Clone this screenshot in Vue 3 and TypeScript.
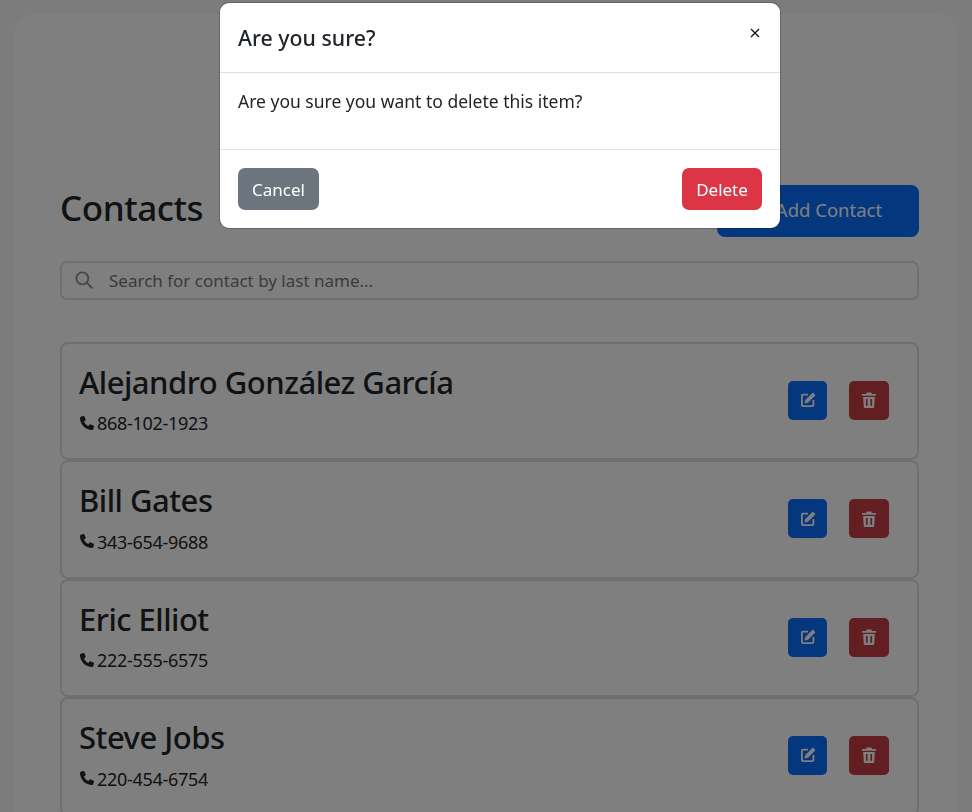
<script setup lang="ts">
interface Contact {
  name: string
  phone: string
}

const contacts: Contact[] = [
  { name: 'Alejandro González García', phone: '868-102-1923' },
  { name: 'Bill Gates', phone: '343-654-9688' },
  { name: 'Eric Elliot', phone: '222-555-6575' },
  { name: 'Steve Jobs', phone: '220-454-6754' },
]
</script>

<template>
  <div class="page">
    <main class="panel">
      <header class="top">
        <h2>Contacts</h2>
        <button class="add-btn">Add Contact</button>
      </header>

      <div class="search">
        <svg class="search-icon" viewBox="0 0 20 20" fill="none" stroke="currentColor" stroke-width="2">
          <circle cx="8.2" cy="8.2" r="6.6" />
          <path d="M13 13l5.6 5.6" stroke-linecap="round" />
        </svg>
        <span class="placeholder">Search for contact by last name...</span>
      </div>

      <ul class="list">
        <li v-for="c in contacts" :key="c.name" class="card">
          <div class="info">
            <h3>{{ c.name }}</h3>
            <div class="phone">
              <svg viewBox="0 0 512 512" class="phone-icon">
                <path fill="currentColor" d="M164.900 24.600c-7.700-18.600-28-28.500-47.400-23.200l-88 24C12.100 30.200 0 46 0 64C0 311.400 200.600 512 448 512c18 0 33.800-12.100 38.600-29.500l24-88c5.300-19.400-4.600-39.700-23.200-47.400l-96-40c-16.300-6.800-35.200-2.100-46.300 11.600L304.700 368C234.300 334.700 177.300 277.700 144 207.300L193.300 167c13.700-11.200 18.400-30 11.600-46.300l-40-96z" />
              </svg>
              <span>{{ c.phone }}</span>
            </div>
          </div>
          <div class="actions">
            <button class="icon-btn edit" aria-label="Edit">
              <svg viewBox="0 0 16 16" width="16" height="16" fill="none">
                <path d="M8 2.600H2.800q-.9 0-.9.900v9.700q0 .9.900.9h9.700q.9 0 .9-.9V8" stroke="currentColor" stroke-width="1.800" />
                <path fill="currentColor" d="M12.800.6l2.700 2.700-7.500 7.500-3.500.8.800-3.500z" />
              </svg>
            </button>
            <button class="icon-btn trash" aria-label="Delete">
              <svg viewBox="0 0 14 16" width="14" height="16">
                <path fill="currentColor" fill-rule="evenodd" d="M4.800.5h4.400l.7 1.500H14v1.700H0V2h4.100zM1.200 5h11.600l-.6 10.200q-.1.800-1 .8H2.800q-.9 0-1-.8zm2.700 2v6.800h1.700V7zm4.500 0v6.800h1.700V7z" />
              </svg>
            </button>
          </div>
        </li>
      </ul>
    </main>

    <div class="backdrop">
      <div class="modal">
        <div class="modal-header">
          <h5>Are you sure?</h5>
          <button class="close" aria-label="Close">
            <svg viewBox="0 0 10 10" width="10" height="10">
              <path d="M1 1l8 8M9 1l-8 8" stroke="currentColor" stroke-width="1.300" />
            </svg>
          </button>
        </div>
        <div class="modal-body">Are you sure you want to delete this item?</div>
        <div class="modal-footer">
          <button class="btn cancel">Cancel</button>
          <button class="btn delete">Delete</button>
        </div>
      </div>
    </div>
  </div>
</template>

<style>
html,
body {
  margin: 0;
  height: 812px;
  overflow: hidden;
}
</style>

<style scoped>
.page {
  height: 812px;
  overflow: hidden;
  box-sizing: border-box;
  padding: 14px 14px 0;
  background: #f8f8f8;
  color: #212529;
  font-family: 'Noto Sans', 'Open Sans', sans-serif;
  font-size: 18px;
  line-height: 1.5;
}

.panel {
  min-height: 900px;
  box-sizing: border-box;
  padding: 171px 39px 0 46px;
  background: #fff;
  border-radius: 20px 20px 0 0;
}

.top {
  display: flex;
  align-items: center;
  justify-content: space-between;
}

h2 {
  margin: 0 0 6px;
  font-size: 35px;
  font-weight: 500;
  line-height: 1.2;
  letter-spacing: -0.45px;
}

.add-btn {
  width: 202px;
  height: 52px;
  padding: 0 0 3px 22px;
  border: 0;
  border-radius: 8px;
  background: #0b6efd;
  color: #fff;
  font: inherit;
  font-size: 18.500px;
}

.search {
  display: flex;
  align-items: center;
  gap: 17px;
  height: 39px;
  margin-top: 24px;
  box-sizing: border-box;
  padding: 0 13px;
  border: 2px solid #dedede;
  border-radius: 7px;
}

.search-icon {
  width: 18px;
  height: 18px;
  margin-top: -1px;
  color: #8a8f94;
}

.placeholder {
  margin-left: -1px;
  color: #777;
  font-size: 17px;
}

.list {
  margin: 42px 0 0;
  padding: 0;
  list-style: none;
}

.card {
  display: flex;
  align-items: center;
  justify-content: space-between;
  padding: 19px 28px 21px 17px;
  border: 2px solid #dedede;
  border-radius: 8px;
}

h3 {
  margin: 0 0 9px;
  padding-top: 1px;
  font-size: 31px;
  font-weight: 500;
  line-height: 37.400px;
  letter-spacing: -0.5px;
}

.phone {
  display: flex;
  align-items: center;
  gap: 3px;
  letter-spacing: -0.3px;
}

.phone-icon {
  width: 14px;
  height: 14px;
  margin-top: -2px;
  margin-left: 1px;
}

.actions {
  display: flex;
  gap: 22px;
}

.icon-btn {
  display: flex;
  align-items: center;
  justify-content: center;
  height: 39px;
  padding: 0;
  border: 0;
  border-radius: 5px;
  color: #fff;
}

.edit {
  width: 39px;
  background: #0b6efd;
}

.trash {
  width: 40px;
  background: #c43c42;
}

.backdrop {
  position: fixed;
  inset: 0;
  background: rgba(0, 0, 0, 0.5);
}

.modal {
  width: 560px;
  box-sizing: border-box;
  margin: 3px 0 0 220px;
  background: #fff;
  border-radius: 9px;
  box-shadow: 0 0 0 1px rgba(0, 0, 0, 0.2);
}

.modal-header {
  display: flex;
  align-items: flex-start;
  justify-content: space-between;
  height: 70px;
  box-sizing: border-box;
  padding: 18px 20px 0 18px;
  border-bottom: 1px solid #dee2e6;
}

h5 {
  margin: 0;
  font-size: 21.300px;
  font-weight: 500;
  line-height: 34px;
}

.close {
  display: flex;
  margin: 7px 0 0;
  padding: 0;
  border: 0;
  background: none;
  color: #111;
}

.modal-body {
  height: 77px;
  box-sizing: border-box;
  padding: 15px 18px 0;
  border-bottom: 1px solid #dee2e6;
  font-size: 17.500px;
}

.modal-footer {
  display: flex;
  justify-content: space-between;
  padding: 18px;
}

.btn {
  height: 42px;
  padding: 1px 14px 0;
  border: 0;
  border-radius: 7px;
  color: #fff;
  font: inherit;
  font-size: 17px;
}

.cancel {
  width: 81px;
  background: #6c757d;
}

.delete {
  width: 80px;
  background: #dc3545;
}
</style>
